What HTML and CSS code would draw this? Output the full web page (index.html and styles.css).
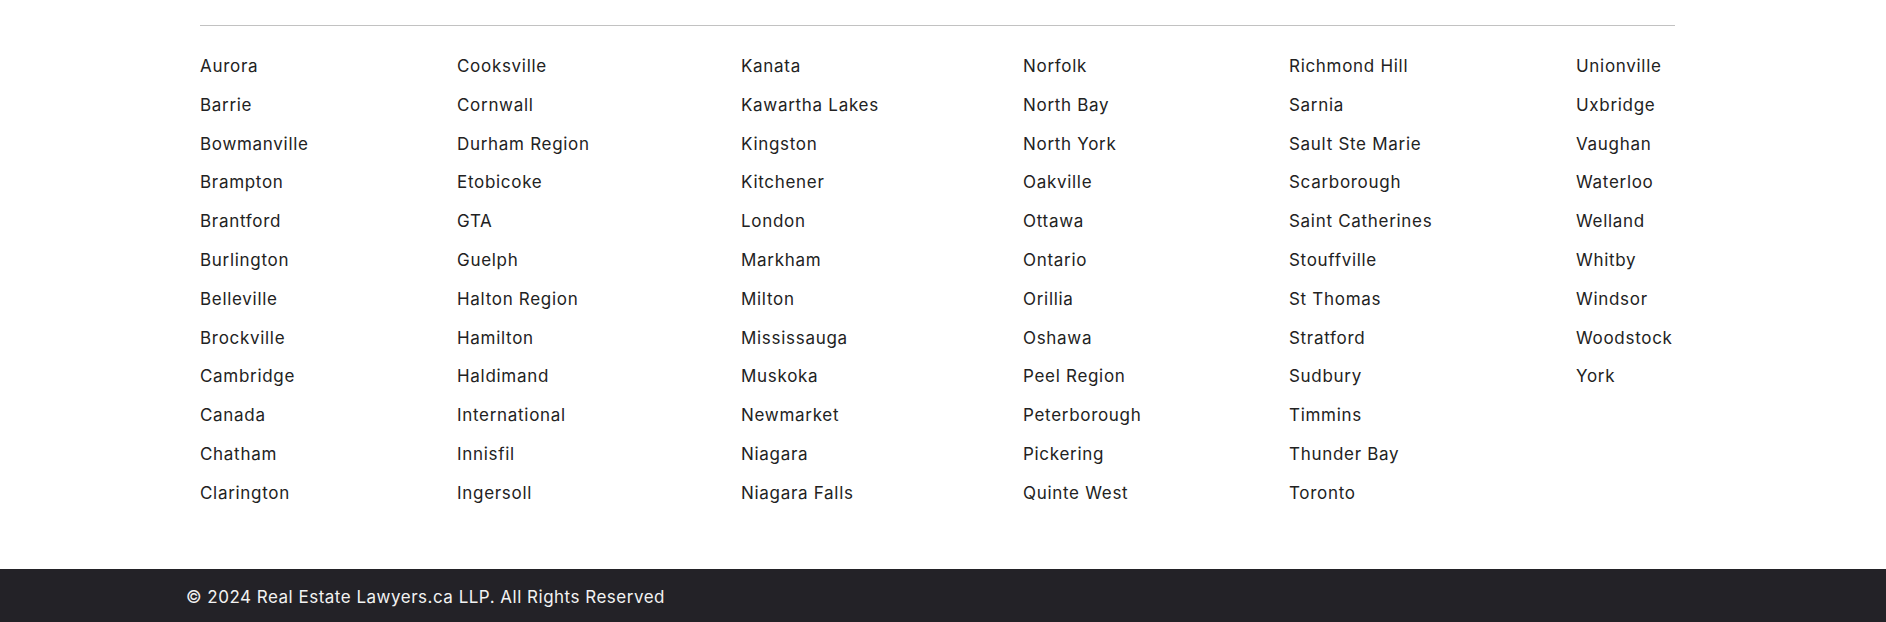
FILE: index.html
```html
<!DOCTYPE html>
<html lang="en">
<head>
<meta charset="utf-8">
<title>Locations</title>
<link rel="stylesheet" href="styles.css">
</head>
<body>
<section class="locations">
  <hr class="divider">
  <div class="columns">
    <ul class="col">
      <li>Aurora</li><li>Barrie</li><li>Bowmanville</li><li>Brampton</li><li>Brantford</li><li>Burlington</li><li>Belleville</li><li>Brockville</li><li>Cambridge</li><li>Canada</li><li>Chatham</li><li>Clarington</li>
    </ul>
    <ul class="col">
      <li>Cooksville</li><li>Cornwall</li><li>Durham Region</li><li>Etobicoke</li><li>GTA</li><li>Guelph</li><li>Halton Region</li><li>Hamilton</li><li>Haldimand</li><li>International</li><li>Innisfil</li><li>Ingersoll</li>
    </ul>
    <ul class="col">
      <li>Kanata</li><li>Kawartha Lakes</li><li>Kingston</li><li>Kitchener</li><li>London</li><li>Markham</li><li>Milton</li><li>Mississauga</li><li>Muskoka</li><li>Newmarket</li><li>Niagara</li><li>Niagara Falls</li>
    </ul>
    <ul class="col">
      <li>Norfolk</li><li>North Bay</li><li>North York</li><li>Oakville</li><li>Ottawa</li><li>Ontario</li><li>Orillia</li><li>Oshawa</li><li>Peel Region</li><li>Peterborough</li><li>Pickering</li><li>Quinte West</li>
    </ul>
    <ul class="col">
      <li>Richmond Hill</li><li>Sarnia</li><li>Sault Ste Marie</li><li>Scarborough</li><li>Saint Catherines</li><li>Stouffville</li><li>St Thomas</li><li>Stratford</li><li>Sudbury</li><li>Timmins</li><li>Thunder Bay</li><li>Toronto</li>
    </ul>
    <ul class="col">
      <li>Unionville</li><li>Uxbridge</li><li>Vaughan</li><li>Waterloo</li><li>Welland</li><li>Whitby</li><li>Windsor</li><li>Woodstock</li><li>York</li>
    </ul>
  </div>
</section>
<footer class="site-footer">
  <p class="copyright">© 2024 Real Estate Lawyers.ca LLP. All Rights Reserved</p>
</footer>
</body>
</html>
```

FILE: styles.css
```css
html, body {
  margin: 0;
  padding: 0;
  background: #ffffff;
}

body {
  font-family: "Inter", "Noto Sans", "DejaVu Sans", sans-serif;
  color: #222222;
}

.locations {
  width: 1475px;
  margin-left: 200px;
  padding-top: 25px;
  padding-bottom: 56px;
}

.divider {
  margin: 0;
  border: 0;
  height: 1px;
  background: #c2c2c2;
}

.columns {
  display: grid;
  grid-template-columns: 257px 284px 282px 266px 287px auto;
  margin-top: 21px;
}

.col {
  list-style: none;
  margin: 0;
  padding: 0;
}

.col li {
  font-size: 17px;
  line-height: 38.8px;
  letter-spacing: 0.7px;
  white-space: nowrap;
}

.site-footer {
  background: #232227;
  padding: 16px 0 20px 186px;
}

.copyright {
  margin: 0;
  color: #f2f2f2;
  font-size: 17px;
  line-height: 24px;
  letter-spacing: 0.5px;
}
```
